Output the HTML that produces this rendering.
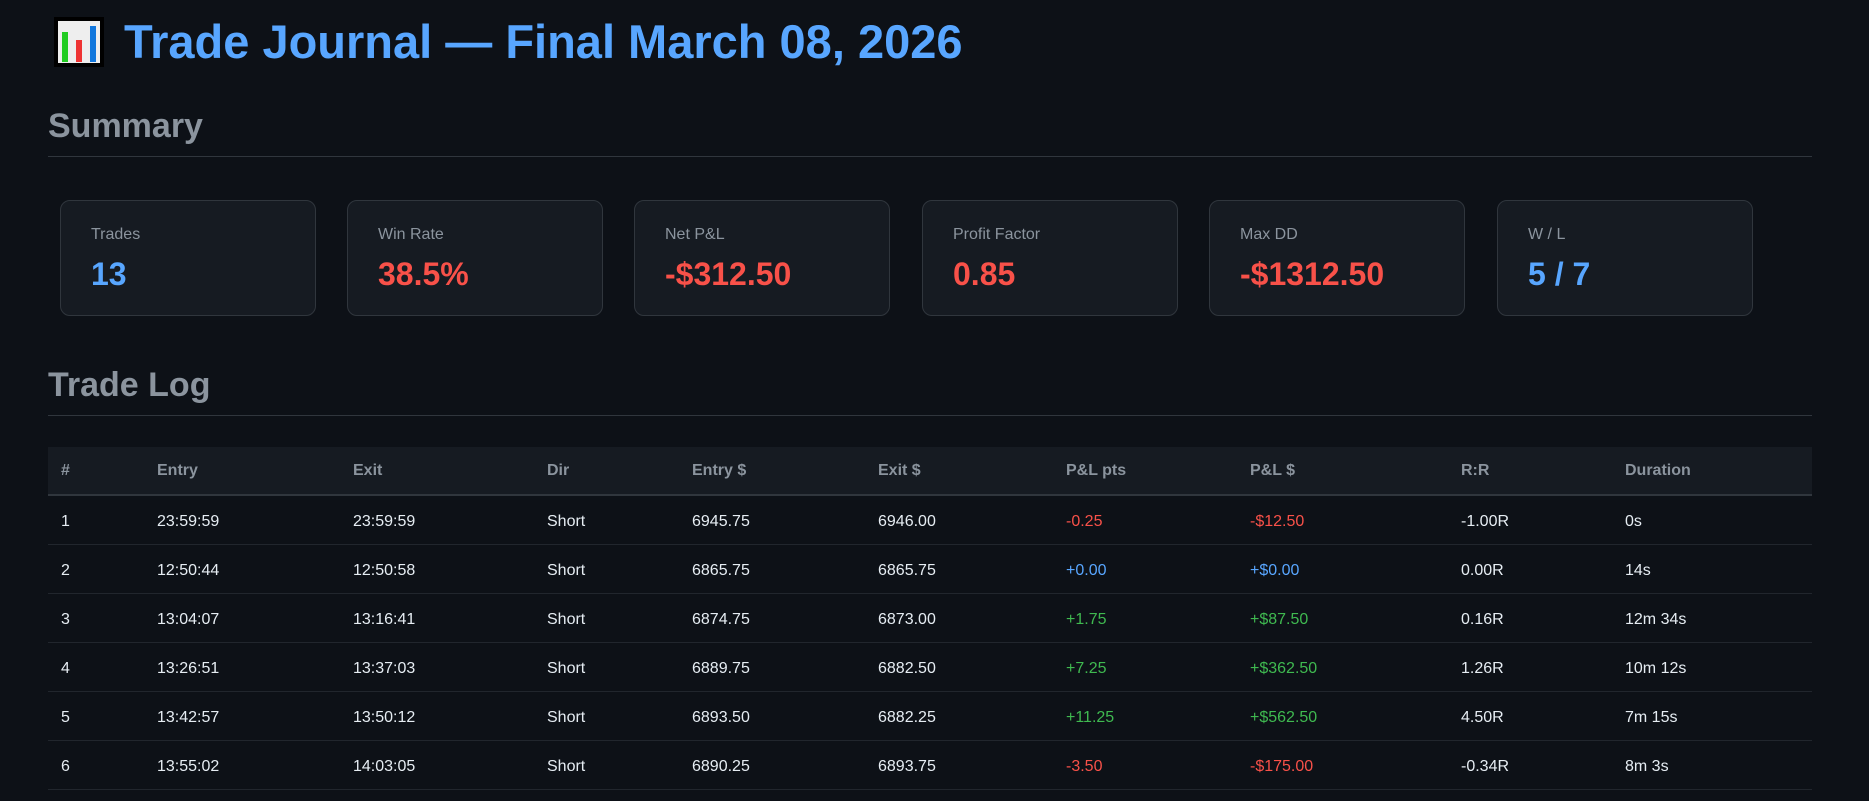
<!DOCTYPE html>
<html><head><meta charset="utf-8"><style>
*{box-sizing:border-box;margin:0;padding:0}
html,body{width:1869px;height:801px;overflow:hidden;background:#0d1117;font-family:"Liberation Sans",sans-serif;color:#e6edf3}
.wrap{position:absolute;left:48px;width:1764px;top:0}
h1{position:absolute;top:14px;left:6px;font-size:47px;font-weight:bold;color:#58a6ff;white-space:nowrap;display:flex;align-items:center}
.ic{width:50px;height:50px;background:#000;margin-right:20px;position:relative}
.ic i{position:absolute;bottom:5px;width:6px}
h2{position:absolute;left:0;font-size:34px;font-weight:bold;color:#8b949e;width:1764px;border-bottom:1px solid #30363d;padding-bottom:10px}
.card{position:absolute;top:200px;width:256px;height:116px;background:#161b22;border:1px solid #30363d;border-radius:10px;padding:0 30px}
.card .l{position:absolute;top:25px;left:30px;font-size:16px;color:#8b949e}
.card .v{position:absolute;top:55px;left:30px;font-size:32px;font-weight:bold}
.b{color:#58a6ff}.r{color:#f85149}.g{color:#3fb950}
table{position:absolute;top:447px;left:0;width:1764px;border-collapse:collapse;font-size:16px}
th{background:#161b22;color:#8b949e;text-align:left;height:48px;padding-left:13px;border-bottom:2px solid #30363d;font-weight:bold}
td{height:49px;padding-left:13px;padding-top:4px;border-bottom:1px solid #21262d}
</style></head><body><div class="wrap">
<h1><span class="ic"><span style="position:absolute;left:4px;top:4px;right:4px;bottom:4px;background:#eee"></span><i style="left:8px;height:30px;background:#2c2"></i><i style="left:22px;height:22px;background:#e33"></i><i style="left:36px;height:36px;background:#17d"></i></span>Trade Journal — Final March 08, 2026</h1>
<h2 style="top:107px">Summary</h2>
<div class="card" style="left:12px"><div class="l">Trades</div><div class="v b">13</div></div>
<div class="card" style="left:299px"><div class="l">Win Rate</div><div class="v r">38.5%</div></div>
<div class="card" style="left:586px"><div class="l">Net P&amp;L</div><div class="v r">-$312.50</div></div>
<div class="card" style="left:874px"><div class="l">Profit Factor</div><div class="v r">0.85</div></div>
<div class="card" style="left:1161px"><div class="l">Max DD</div><div class="v r">-$1312.50</div></div>
<div class="card" style="left:1449px"><div class="l">W / L</div><div class="v b">5 / 7</div></div>
<h2 style="top:366px">Trade Log</h2>
<table>
<colgroup><col style="width:96px"><col style="width:196px"><col style="width:194px"><col style="width:145px"><col style="width:186px"><col style="width:188px"><col style="width:184px"><col style="width:211px"><col style="width:164px"><col></colgroup>
<tr><th>#</th><th>Entry</th><th>Exit</th><th>Dir</th><th>Entry $</th><th>Exit $</th><th>P&amp;L pts</th><th>P&amp;L $</th><th>R:R</th><th>Duration</th></tr>
<tr><td>1</td><td>23:59:59</td><td>23:59:59</td><td>Short</td><td>6945.75</td><td>6946.00</td><td class="r">-0.25</td><td class="r">-$12.50</td><td>-1.00R</td><td>0s</td></tr>
<tr><td>2</td><td>12:50:44</td><td>12:50:58</td><td>Short</td><td>6865.75</td><td>6865.75</td><td class="b">+0.00</td><td class="b">+$0.00</td><td>0.00R</td><td>14s</td></tr>
<tr><td>3</td><td>13:04:07</td><td>13:16:41</td><td>Short</td><td>6874.75</td><td>6873.00</td><td class="g">+1.75</td><td class="g">+$87.50</td><td>0.16R</td><td>12m 34s</td></tr>
<tr><td>4</td><td>13:26:51</td><td>13:37:03</td><td>Short</td><td>6889.75</td><td>6882.50</td><td class="g">+7.25</td><td class="g">+$362.50</td><td>1.26R</td><td>10m 12s</td></tr>
<tr><td>5</td><td>13:42:57</td><td>13:50:12</td><td>Short</td><td>6893.50</td><td>6882.25</td><td class="g">+11.25</td><td class="g">+$562.50</td><td>4.50R</td><td>7m 15s</td></tr>
<tr><td>6</td><td>13:55:02</td><td>14:03:05</td><td>Short</td><td>6890.25</td><td>6893.75</td><td class="r">-3.50</td><td class="r">-$175.00</td><td>-0.34R</td><td>8m 3s</td></tr>
</table>
</div></body></html>
